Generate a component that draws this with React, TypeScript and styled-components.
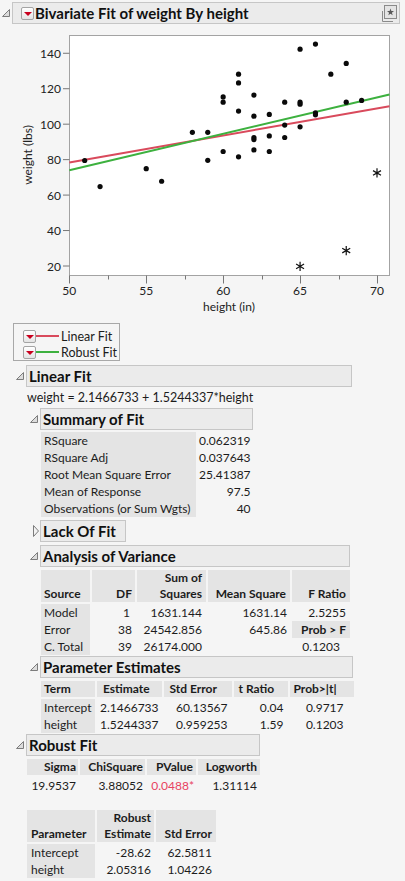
import React from 'react'
import styled, { createGlobalStyle } from 'styled-components'

const GlobalStyle = createGlobalStyle`
  body {
    margin: 0;
    background: #f5f5f5;
    font-family: Lato, 'Liberation Sans', sans-serif;
    color: #1c1c1c;
  }
`

const Page = styled.div`
  padding-top: 2px;
  width: 405px;
`

const OutlineWrap = styled.div<{ $nested?: boolean; $top?: number }>`
  margin-left: ${({ $nested }) => ($nested ? 2 : 0)}px;
  margin-top: ${({ $top }) => $top ?? 0}px;
`

const OutlineRow = styled.div`
  display: flex;
  align-items: center;
`

const ToggleSlot = styled.span`
  width: 12px;
  height: 22px;
  display: flex;
  align-items: center;
`

const HeaderBox = styled.div<{ $w: number; $pl?: number }>`
  width: ${({ $w }) => $w}px;
  height: 22px;
  box-sizing: border-box;
  border: 1px solid #c6c6c6;
  background: #ebebeb;
  display: flex;
  align-items: center;
  gap: 1px;
  padding-left: ${({ $pl }) => $pl ?? 2}px;
  font-size: 15px;
  font-weight: 700;
  color: #111;
  white-space: nowrap;
`

const Body = styled.div<{ $pt?: number }>`
  padding-left: 12px;
  padding-top: ${({ $pt }) => $pt ?? 3}px;
`

const MenuButton = styled.span`
  width: 13px;
  height: 13px;
  flex: none;
  box-sizing: border-box;
  border: 1px solid #a4a4a4;
  border-radius: 2px;
  background: linear-gradient(#ffffff, #e4e4e4);
  display: inline-flex;
  align-items: center;
  justify-content: center;
  &::after {
    content: '';
    border-left: 4px solid transparent;
    border-right: 4px solid transparent;
    border-top: 4px solid #c8001e;
    margin-top: 1px;
  }
`

const Spacer = styled.span`
  flex: 1;
`

const Disclosure = ({ open }: { open: boolean }) =>
  open ? (
    <svg width="12" height="12" viewBox="0 0 12 12">
      <polygon points="9.5,2.5 9.5,9.5 2.5,9.5" fill="#dcdcdc" stroke="#7c7c7c" strokeWidth="1" />
    </svg>
  ) : (
    <svg width="12" height="12" viewBox="0 0 12 12">
      <polygon points="5.5,0.5 10.5,6 5.5,11.5" fill="#f2f2f2" stroke="#7c7c7c" strokeWidth="1" />
    </svg>
  )

const PinIcon = () => (
  <svg width="18" height="18" viewBox="0 0 18 18" style={{ marginRight: 1 }}>
    <path d="M2.5 7 V17.5 H13" fill="none" stroke="#8a8a8a" strokeWidth="1" />
    <rect x="4.5" y="1.5" width="12" height="13" fill="#e4e4e4" stroke="#8a8a8a" />
    <polygon
      points="10.5,4.5 11.4,7.1 14,7.1 11.9,8.7 12.7,11.3 10.5,9.7 8.3,11.3 9.1,8.7 7,7.1 9.6,7.1"
      fill="#5a5a5a"
    />
  </svg>
)

type OutlineProps = {
  title: string
  width: number
  open?: boolean
  nested?: boolean
  top?: number
  menu?: boolean
  pin?: boolean
  pt?: number
  children?: React.ReactNode
}

const Outline = ({ title, width, open = true, nested = true, top, menu, pin, pt, children }: OutlineProps) => (
  <OutlineWrap $nested={nested} $top={top}>
    <OutlineRow>
      <ToggleSlot>
        <Disclosure open={open} />
      </ToggleSlot>
      <HeaderBox $w={width} $pl={menu ? 8 : 2}>
        {menu && <MenuButton />}
        <span>{title}</span>
        {pin && (
          <>
            <Spacer />
            <PinIcon />
          </>
        )}
      </HeaderBox>
    </OutlineRow>
    {open && children && <Body $pt={pt}>{children}</Body>}
  </OutlineWrap>
)

/* ---------- chart ---------- */

const px = (x: number) => 69.3 + (x - 50) * 15.385
const py = (y: number) => 266 - (y - 20) * 1.7727

const dots: [number, number][] = [
  [51, 79.5], [52, 64.8], [55, 74.9], [56, 67.8], [58, 95.4], [59, 95.4], [59, 79.6],
  [60, 115.4], [60, 112.4], [60, 84.6], [61, 128.2], [61, 123.3], [61, 107.4], [61, 81.6],
  [62, 116.4], [62, 104.5], [62, 92.5], [62, 91.3], [62, 85.5], [63, 105.5], [63, 93.4],
  [63, 84.6], [64, 112.4], [64, 99.5], [64, 92.5], [65, 142.3], [65, 112.4], [65, 111.3],
  [65, 98.5], [66, 145.2], [66, 106.4], [66, 105.3], [67, 128.2], [68, 134.3], [68, 112.4],
  [69, 113.4],
]

const stars: [number, number][] = [[65, 19.8], [68, 28.7], [70, 72.5]]

const Chart = styled.svg`
  display: block;
  font-family: Lato, 'Liberation Sans', sans-serif;
  font-size: 12px;
`

const FRAME = { x0: 69.5, x1: 389.5, y0: 35.5, y1: 275.5 }
const xEnd = 50 + (FRAME.x1 - 69.3) / 15.385

const Asterisk = ({ x, y }: { x: number; y: number }) => {
  const r = 4.6
  const dx = r * Math.cos(Math.PI / 6)
  const dy = r * Math.sin(Math.PI / 6)
  return (
    <path
      d={`M${x} ${y - r} L${x} ${y + r} M${x - dx} ${y - dy} L${x + dx} ${y + dy} M${x - dx} ${y + dy} L${x + dx} ${y - dy}`}
      stroke="#111"
      strokeWidth="1.2"
    />
  )
}

const Plot = () => {
  const lin = (x: number) => 2.1466733 + 1.5244337 * x
  const rob = (x: number) => -28.62 + 2.05316 * x
  return (
    <Chart width="393" height="296" viewBox="12 27 393 296">
      <rect
        x={FRAME.x0}
        y={FRAME.y0}
        width={FRAME.x1 - FRAME.x0}
        height={FRAME.y1 - FRAME.y0}
        fill="#fff"
        stroke="#a3a3a3"
      />
      {[20, 40, 60, 80, 100, 120, 140].map(v => (
        <g key={v}>
          <line x1={63} x2={FRAME.x0} y1={py(v)} y2={py(v)} stroke="#777" />
          <text x={61} y={py(v) + 4.5} textAnchor="end" fill="#222">
            {v}
          </text>
        </g>
      ))}
      {[50, 52.5, 55, 57.5, 60, 62.5, 65, 67.5, 70].map(v => {
        const major = v % 5 === 0
        const x = Math.round(px(v)) + 0.5
        return (
          <g key={v}>
            <line x1={x} x2={x} y1={FRAME.y1} y2={FRAME.y1 + (major ? 8 : 4)} stroke="#777" />
            {major && (
              <text x={px(v)} y={295} textAnchor="middle" fill="#222">
                {v}
              </text>
            )}
          </g>
        )
      })}
      <text x={229} y={311} textAnchor="middle" fill="#222">
        height (in)
      </text>
      <text x={0} y={0} textAnchor="middle" fill="#222" transform="translate(32 155) rotate(-90)">
        weight (lbs)
      </text>
      <line x1={px(50)} y1={py(lin(50))} x2={FRAME.x1} y2={py(lin(xEnd))} stroke="#d94a5c" strokeWidth="2" />
      <line x1={px(50)} y1={py(rob(50))} x2={FRAME.x1} y2={py(rob(xEnd))} stroke="#3db13f" strokeWidth="2" />
      {dots.map(([x, y], i) => (
        <circle key={i} cx={px(x)} cy={py(y)} r={2.6} fill="#0a0a0a" />
      ))}
      {stars.map(([x, y], i) => (
        <Asterisk key={i} x={px(x)} y={py(y)} />
      ))}
    </Chart>
  )
}

/* ---------- legend ---------- */

const LegendBox = styled.div`
  margin: 0 0 4px 1px;
  width: 107px;
  height: 38px;
  box-sizing: border-box;
  border: 1px solid #a8a8a8;
  padding: 4px 0 0 9px;
`

const LegendRow = styled.div`
  display: flex;
  align-items: center;
  height: 16px;
  font-size: 12.5px;
`

const Swatch = styled.span<{ $color: string }>`
  width: 23px;
  height: 2px;
  background: ${({ $color }) => $color};
  margin-right: 2px;
`

/* ---------- tables ---------- */

const Table = styled.table`
  border-collapse: separate;
  border-spacing: 0;
  table-layout: fixed;
  margin: 0 0 0 1px;
  font-size: 12px;
`

const Cell = styled.td<{ $shade?: boolean; $bold?: boolean; $align?: string; $pr?: number; $pl?: number; $last?: boolean }>`
  padding: 0 ${({ $pr }) => $pr ?? 3}px 0 ${({ $pl }) => $pl ?? 3}px;
  height: 17px;
  line-height: 17px;
  white-space: nowrap;
  text-align: ${({ $align }) => $align ?? 'right'};
  font-weight: ${({ $bold }) => ($bold ? 700 : 400)};
  background: ${({ $shade }) => ($shade ? '#e4e4e4' : 'transparent')};
  background-clip: padding-box;
  border-right: ${({ $last }) => ($last ? 0 : 2)}px solid transparent;
  color: #1c1c1c;
`

const HeadCell = styled(Cell).attrs({ as: 'th' })`
  background: #e4e4e4;
  background-clip: padding-box;
  font-weight: 700;
  vertical-align: bottom;
  line-height: 16px;
  height: auto;
  border-bottom: 2px solid transparent;
`

const Equation = styled.div`
  margin: 0 0 2px 1px;
  line-height: 16px;
  font-size: 12.5px;
`

const Red = styled.span`
  color: #e8435f;
`

const Gap = styled.div<{ $h: number }>`
  height: ${({ $h }) => $h}px;
`

const Cols = ({ widths }: { widths: number[] }) => (
  <colgroup>
    {widths.map((w, i) => (
      <col key={i} style={{ width: w }} />
    ))}
  </colgroup>
)

const summary: [string, string][] = [
  ['RSquare', '0.062319'],
  ['RSquare Adj', '0.037643'],
  ['Root Mean Square Error', '25.41387'],
  ['Mean of Response', '97.5'],
  ['Observations (or Sum Wgts)', '40'],
]

const App = () => (
  <Page>
    <GlobalStyle />
    <Outline title="Bivariate Fit of weight By height" width={388} nested={false} menu pin pt={3}>
      <Plot />
      <LegendBox>
        <LegendRow>
          <MenuButton />
          <Swatch $color="#d94a5c" />
          Linear Fit
        </LegendRow>
        <LegendRow>
          <MenuButton />
          <Swatch $color="#3db13f" />
          Robust Fit
        </LegendRow>
      </LegendBox>

      <Outline title="Linear Fit" width={326}>
        <Equation>weight = 2.1466733 + 1.5244337*height</Equation>

        <Outline title="Summary of Fit" width={213} pt={2}>
          <Table>
            <Cols widths={[155, 57]} />
            <tbody>
              {summary.map(([k, v]) => (
                <tr key={k}>
                  <Cell $shade $align="left" $last>
                    {k}
                  </Cell>
                  <Cell $last>{v}</Cell>
                </tr>
              ))}
            </tbody>
          </Table>
        </Outline>

        <Outline title="Lack Of Fit" width={86} open={false} top={3} />

        <Outline title="Analysis of Variance" width={310} top={3}>
          <Table>
            <Cols widths={[51, 45, 71, 84, 58]} />
            <thead>
              <tr>
                <HeadCell $align="left">Source</HeadCell>
                <HeadCell>DF</HeadCell>
                <HeadCell $pr={4}>
                  Sum of
                  <br />
                  Squares
                </HeadCell>
                <HeadCell $pr={4}>Mean Square</HeadCell>
                <HeadCell $pr={4} $last>
                  F Ratio
                </HeadCell>
              </tr>
            </thead>
            <tbody>
              <tr>
                <Cell $shade $align="left">Model</Cell>
                <Cell $pr={5}>1</Cell>
                <Cell $pr={4}>1631.144</Cell>
                <Cell $pr={3}>1631.14</Cell>
                <Cell $pr={4} $last>2.5255</Cell>
              </tr>
              <tr>
                <Cell $shade $align="left">Error</Cell>
                <Cell>38</Cell>
                <Cell $pr={4}>24542.856</Cell>
                <Cell $pr={3}>645.86</Cell>
                <Cell $shade $bold $pr={4} $last>
                  Prob &gt; F
                </Cell>
              </tr>
              <tr>
                <Cell $shade $align="left">C. Total</Cell>
                <Cell>39</Cell>
                <Cell $pr={4}>26174.000</Cell>
                <Cell />
                <Cell $pr={10} $last>0.1203</Cell>
              </tr>
            </tbody>
          </Table>
        </Outline>

        <Outline title="Parameter Estimates" width={313} top={1}>
          <Table>
            <Cols widths={[56, 66, 70, 56, 64]} />
            <thead>
              <tr>
                <HeadCell $align="left">Term</HeadCell>
                <HeadCell $align="left" $pl={6}>Estimate</HeadCell>
                <HeadCell $align="left" $pl={6}>Std Error</HeadCell>
                <HeadCell $align="left" $pl={5}>t Ratio</HeadCell>
                <HeadCell $align="left" $pl={4} $last>
                  Prob&gt;|t|
                </HeadCell>
              </tr>
            </thead>
            <tbody>
              <tr>
                <Cell $shade $align="left">Intercept</Cell>
                <Cell>2.1466733</Cell>
                <Cell $pr={4}>60.13567</Cell>
                <Cell $pr={4}>0.04</Cell>
                <Cell $pr={10} $last>0.9717</Cell>
              </tr>
              <tr>
                <Cell $shade $align="left">height</Cell>
                <Cell>1.5244337</Cell>
                <Cell $pr={4}>0.959253</Cell>
                <Cell $pr={4}>1.59</Cell>
                <Cell $pr={10} $last>0.1203</Cell>
              </tr>
            </tbody>
          </Table>
        </Outline>
      </Outline>

      <Outline title="Robust Fit" width={234} top={1}>
        <Table>
          <Cols widths={[53, 67, 51, 62]} />
          <thead>
            <tr>
              <HeadCell $pr={2}>Sigma</HeadCell>
              <HeadCell $pr={2}>ChiSquare</HeadCell>
              <HeadCell $pr={3}>PValue</HeadCell>
              <HeadCell $pr={3} $last>
                Logworth
              </HeadCell>
            </tr>
          </thead>
          <tbody>
            <tr>
              <Cell $pr={2}>19.9537</Cell>
              <Cell $pr={2}>3.88052</Cell>
              <Cell $pr={2}>
                <Red>0.0488*</Red>
              </Cell>
              <Cell $pr={3} $last>1.31114</Cell>
            </tr>
          </tbody>
        </Table>
        <Gap $h={16} />
        <Table>
          <Cols widths={[70, 59, 60]} />
          <thead>
            <tr>
              <HeadCell $align="left" $pl={4}>Parameter</HeadCell>
              <HeadCell $pr={3}>
                Robust
                <br />
                Estimate
              </HeadCell>
              <HeadCell $pr={4} $last>
                Std Error
              </HeadCell>
            </tr>
          </thead>
          <tbody>
            <tr>
              <Cell $shade $align="left" $pl={4}>Intercept</Cell>
              <Cell $pr={3}>-28.62</Cell>
              <Cell $pr={4} $last>62.5811</Cell>
            </tr>
            <tr>
              <Cell $shade $align="left" $pl={4}>height</Cell>
              <Cell $pr={3}>2.05316</Cell>
              <Cell $pr={4} $last>1.04226</Cell>
            </tr>
          </tbody>
        </Table>
      </Outline>
    </Outline>
  </Page>
)

export default App
